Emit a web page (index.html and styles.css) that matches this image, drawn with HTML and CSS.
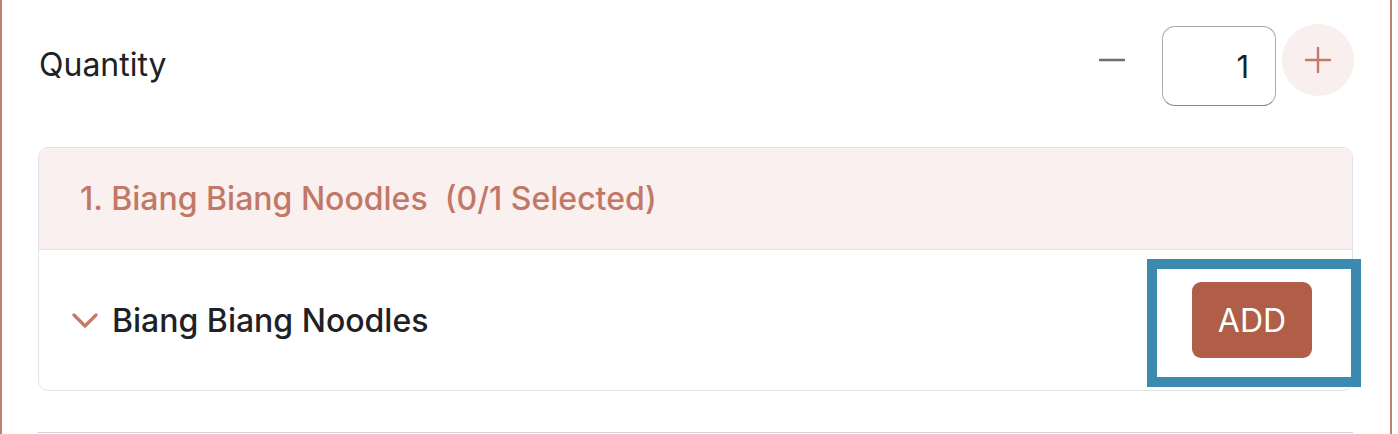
FILE: index.html
```html
<!DOCTYPE html>
<html lang="en">
    <head>
        <meta charset="utf-8"/>
        <title>Biang Biang Noodles</title>
        <link rel="stylesheet" href="styles.css">
    </head>
    <body>
        <div class="panel">
            <!-- Quantity -->
            <div class="qtyRow">
                <span class="qtyLabel">Quantity</span>
                <button class="qtyMinus" aria-label="Decrease">
                    <svg width="26" height="4" viewBox="0 0 26 4"><line x1="1" y1="2" x2="25" y2="2" stroke="#6e6e6e" stroke-width="2.6" stroke-linecap="round"/></svg>
                </button>
                <input class="qtyInput" type="text" value="1">
                <button class="qtyPlus" aria-label="Increase">
                    <svg width="28" height="28" viewBox="0 0 28 28"><path d="M14 2v24M2 14h24" stroke="#c47a66" stroke-width="2.4" stroke-linecap="round" fill="none"/></svg>
                </button>
            </div>

            <!-- Option group -->
            <div class="group">
                <div class="groupHead">1. Biang Biang Noodles&nbsp;&nbsp;(0/1 Selected)</div>
                <div class="groupRow">
                    <svg class="chevron" width="26" height="16" viewBox="0 0 26 16"><path d="M2 2l11 11L24 2" stroke="#c47a66" stroke-width="3.2" fill="none" stroke-linecap="round" stroke-linejoin="round"/></svg>
                    <span class="itemName">Biang Biang Noodles</span>
                    <div class="addFocus">
                        <button class="addButton">ADD</button>
                    </div>
                </div>
            </div>

            <div class="divider"></div>
        </div>
    </body>
</html>
```

FILE: styles.css
```css
body{
    margin: 0px;
    background-color: #fff;
    font-family: Inter, "Noto Sans", sans-serif;
    overflow: hidden;
}

.panel{
    width: 1392px;
    box-sizing: border-box;
    height: 434px;
    border-left: 2px solid #c67e6e;
    border-right: 2px solid #c67e6e;
    padding: 24px 37px 0 36px;
}

.qtyRow{
    display: flex;
    align-items: flex-start;
    height: 82px;
}

.qtyLabel{
    flex: 1;
    margin-top: 22px;
    font-size: 32px;
    line-height: 38px;
    color: #202124;
    padding-left: 1px;
}

.qtyMinus{
    width: 50px;
    height: 72px;
    margin-right: 25px;
    border: none;
    background: none;
    padding: 0;
    display: flex;
    align-items: center;
    justify-content: center;
}

.qtyInput{
    width: 114px;
    height: 80px;
    margin-top: 2px;
    box-sizing: border-box;
    border: 1.5px solid #a9a9ae;
    border-bottom-color: #85858a;
    border-radius: 13px;
    font-family: Inter, sans-serif;
    font-size: 31px;
    color: #202124;
    text-align: right;
    padding: 0 26px 0 0;
    margin-right: 6px;
}

.qtyPlus{
    width: 72px;
    height: 72px;
    border-radius: 50%;
    border: none;
    background-color: #f8efee;
    display: flex;
    align-items: center;
    justify-content: center;
    padding: 0;
    margin-right: -1px;
}

.group{
    margin-top: 41px;
    border: 1px solid #e1e3e7;
    border-radius: 10px;
}

.groupHead{
    background-color: #f9f0ef;
    border-bottom: 1px solid #e1e3e7;
    border-radius: 10px 10px 0 0;
    height: 101px;
    display: flex;
    align-items: center;
    padding-left: 41px;
    font-size: 32px;
    font-weight: 500;
    color: #c17866;
}

.groupRow{
    height: 140px;
    display: flex;
    align-items: center;
    padding-left: 33px;
}

.chevron{
    margin-top: 2px;
}

.itemName{
    flex: 1;
    margin-left: 14px;
    font-size: 32px;
    font-weight: 500;
    color: #202124;
}

.addFocus{
    padding: 13px 39px 19px 35px;
    outline: 10px solid #3c8ab0;
    margin-right: 1px;
    margin-top: 6px;
}

.addButton{
    width: 120px;
    height: 76px;
    border: none;
    border-radius: 9px;
    background-color: #b05e48;
    color: #fff;
    font-family: Inter, sans-serif;
    font-size: 32px;
    display: block;
}

.divider{
    margin-top: 41px;
    height: 1px;
    background-color: #d2d2d4;
}
```
